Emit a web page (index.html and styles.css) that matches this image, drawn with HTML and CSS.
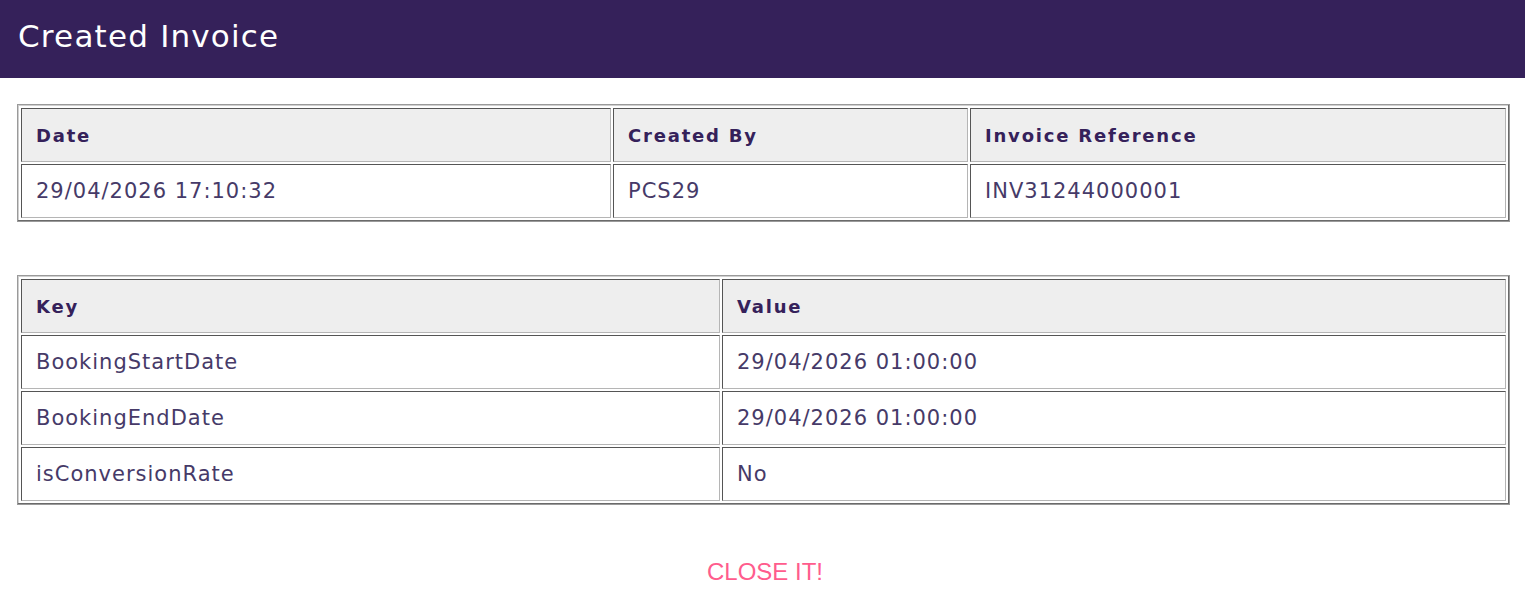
FILE: index.html
```html
<!DOCTYPE html>
<html lang="en">
<head>
    <meta charset="UTF-8" />
    <title>Created Invoice</title>
    <link rel="stylesheet" href="styles.css">
</head>
<body>

<div class="modal">
    <div class="modal-header">
        <h1 class="modal-title">Created Invoice</h1>
    </div>

    <div class="modal-body">
        <table class="info-table">
            <colgroup>
                <col class="col-date">
                <col class="col-user">
                <col>
            </colgroup>
            <thead>
                <tr>
                    <th>Date</th>
                    <th>Created By</th>
                    <th>Invoice Reference</th>
                </tr>
            </thead>
            <tbody>
                <tr>
                    <td>29/04/2026 17:10:32</td>
                    <td>PCS29</td>
                    <td>INV31244000001</td>
                </tr>
            </tbody>
        </table>

        <table class="info-table">
            <colgroup>
                <col class="col-key">
                <col>
            </colgroup>
            <thead>
                <tr>
                    <th>Key</th>
                    <th>Value</th>
                </tr>
            </thead>
            <tbody>
                <tr>
                    <td>BookingStartDate</td>
                    <td>29/04/2026 01:00:00</td>
                </tr>
                <tr>
                    <td>BookingEndDate</td>
                    <td>29/04/2026 01:00:00</td>
                </tr>
                <tr>
                    <td>isConversionRate</td>
                    <td>No</td>
                </tr>
            </tbody>
        </table>

        <div class="modal-footer">
            <a class="close-link" href="#">CLOSE IT!</a>
        </div>
    </div>
</div>

</body>
</html>
```

FILE: styles.css
```css
body {
    margin: 0;
    background: #fff;
    font-family: "DejaVu Sans", "Open Sans", sans-serif;
    color: #40325f;
}

.modal-header {
    background-color: #35215a;
    height: 78px;
    display: flex;
    align-items: center;
    padding: 0 18px;
    box-sizing: border-box;
}

.modal-title {
    margin: 0;
    color: #fff;
    font-weight: 400;
    font-size: 31px;
    letter-spacing: 1.2px;
    padding-bottom: 6px;
}

.modal-body {
    padding: 26px 15px 0 17px;
}

/* old-school bordered tables */
.info-table {
    width: 100%;
    border: 1px solid #9a9a9a;
    border-spacing: 2px;
    margin-bottom: 53px;
    box-shadow: inset -1px -1px 0 #6a6a6a, inset 1px 1px 0 #cfcfcf;
    padding: 1px;
}

.info-table th,
.info-table td {
    border: 1px solid #555;
    border-right-color: #b5b5b5;
    border-bottom-color: #b5b5b5;
    text-align: left;
    padding: 0 14px;
    height: 52px;
}

.info-table th {
    background-color: #eeeeee;
    color: #35215a;
    font-weight: 700;
    font-size: 18px;
    letter-spacing: 1.8px;
}

.info-table td {
    font-size: 21px;
    letter-spacing: 1px;
    color: #463a68;
}

.col-date { width: 590px; }
.col-user { width: 355px; }
.col-key { width: 699px; }

.modal-footer {
    text-align: center;
}

.close-link {
    font-family: "Liberation Sans", Arial, sans-serif;
    font-size: 24px;
    color: #ff5c8d;
    text-decoration: none;
    margin-left: 3px;
}
```
